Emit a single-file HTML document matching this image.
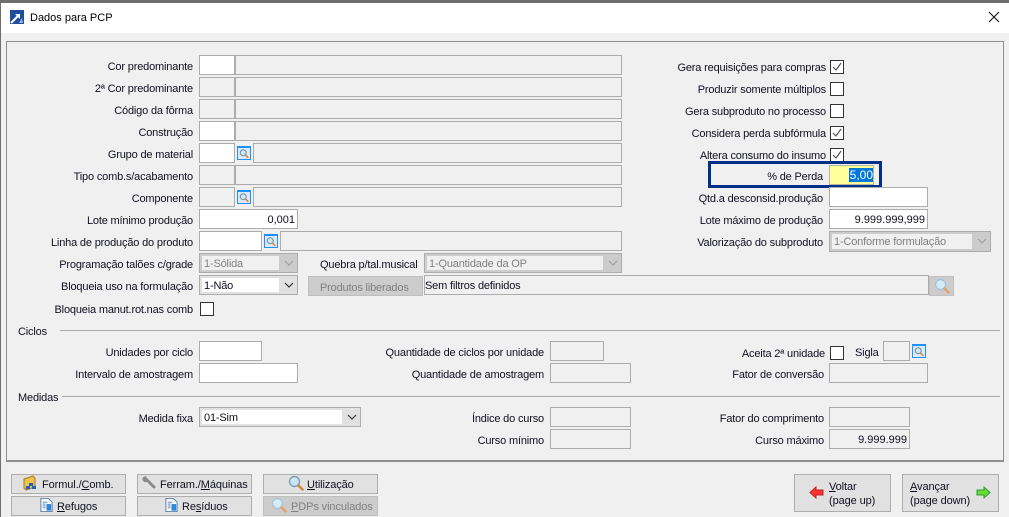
<!DOCTYPE html>
<html><head><meta charset="utf-8"><style>
html,body{margin:0;padding:0}
body{width:1009px;height:517px;overflow:hidden;background:#f0f0f0;position:relative;font:11px/16px "Liberation Sans",sans-serif;letter-spacing:-.17px;color:#101020}
div,svg{position:absolute;box-sizing:border-box}
.f{border:1px solid #acacac;background:#f0f0f0}
.w{background:#fff}
.t{white-space:nowrap;margin-top:1px}
.r{white-space:nowrap;text-align:right;left:-1px;margin-top:1px}
.v{text-align:right;padding-right:2px;line-height:20px;white-space:nowrap;color:#101020;letter-spacing:0}
.c{width:14px;height:14px;border:1px solid #333;background:#fff}
.b{border:1px solid #adadad;background:#e1e1e1;height:20px}
.d{background:#ccc;border-color:#bfbfbf}
.x{white-space:nowrap;letter-spacing:-.1px;margin-top:1px}
.g{color:#808080}
.s{border:1px solid #acacac;background:#ccc;height:20px}
.s i{position:absolute;left:2px;top:2px;bottom:2px;right:18px;background:#f0f0f0;font-style:normal;line-height:16px;padding-left:2px;color:#808080;white-space:nowrap}
.s svg{right:3px;top:6px}
.q{width:14px;height:14px;border:1px solid #1e90ff;border-top-width:2px;background:#dfe9f5}
u{text-decoration:underline}
</style></head><body>
<svg width="0" height="0" style="display:none"><defs>
<symbol id="m" viewBox="0 0 14 14"><circle cx="6" cy="6" r="3.8" fill="#cfe6f2" stroke="#6d8ca0" stroke-width="1.3"/><path d="M9 9l3.5 3.5" stroke="#e08a3c" stroke-width="2.2"/></symbol>
<symbol id="n" viewBox="0 0 16 16"><circle cx="6.5" cy="6.5" r="5" fill="#d4ecf8" stroke="#a9c4d4" stroke-width="1.4"/><path d="M10.5 10.5l4 4" stroke="#e2a468" stroke-width="2.6" stroke-linecap="round"/></symbol>
<symbol id="o" viewBox="0 0 16 16"><circle cx="6.5" cy="6.5" r="5" fill="#c8e6f6" stroke="#7fa0b4" stroke-width="1.4"/><path d="M10.5 10.5l4 4" stroke="#d0863c" stroke-width="2.6" stroke-linecap="round"/></symbol>
<symbol id="doc" viewBox="0 0 16 16"><path d="M2 1h8l4 4v10H2z" fill="#f4f8fc" stroke="#5a7fa8"/><path d="M4 5h5M4 7h3M4 9h3M4 11h3" stroke="#5a7fa8"/><rect x="8" y="7" width="5" height="7" fill="#2f86d6"/></symbol>
</defs></svg>

<div style="left:0;top:0;width:1009px;height:3px;background:#6e6e6e"></div>
<div style="left:0;top:0;width:1px;height:517px;background:#6e6e6e"></div>
<div style="left:1px;top:3px;width:1008px;height:30px;background:#fff"></div>
<svg style="left:10px;top:10px" width="14" height="14" viewBox="0 0 14 14"><rect width="14" height="14" fill="#1f4e9a"/><path d="M1 13L8 6" stroke="#fff" stroke-width="2"/><path d="M5 4h5v5z" fill="#fff"/><path d="M9 13l3-5 1 5z" fill="#9fb7da"/></svg>
<div class="t" style="left:30px;top:9px;color:#000;letter-spacing:0">Dados para PCP</div>
<svg style="left:988px;top:11px" width="12" height="12" viewBox="0 0 12 12"><path d="M1 1l10 10M11 1L1 11" stroke="#111" stroke-width="1.1"/></svg>

<div style="left:6px;top:41px;width:998px;height:421px;border:1px solid #8f8f8f;border-bottom:2px solid #8f8f8f"></div>

<div class="r" style="width:194px;top:58px">Cor predominante</div>
<div class="r" style="width:194px;top:80px">2ª Cor predominante</div>
<div class="r" style="width:194px;top:102px">Código da fôrma</div>
<div class="r" style="width:194px;top:124px">Construção</div>
<div class="r" style="width:194px;top:146px">Grupo de material</div>
<div class="r" style="width:194px;top:168px">Tipo comb.s/acabamento</div>
<div class="r" style="width:194px;top:190px">Componente</div>
<div class="r" style="width:194px;top:212px">Lote mínimo produção</div>
<div class="r" style="width:194px;top:234px">Linha de produção do produto</div>
<div class="r" style="width:194px;top:256px">Programação talões c/grade</div>
<div class="r" style="width:194px;top:278px">Bloqueia uso na formulação</div>
<div class="r" style="width:194px;top:301px">Bloqueia manut.rot.nas comb</div>

<div class="f w" style="left:199px;top:55px;width:36px;height:20px"></div>
<div class="f" style="left:235px;top:55px;width:387px;height:20px"></div>
<div class="f" style="left:199px;top:77px;width:36px;height:20px"></div>
<div class="f" style="left:235px;top:77px;width:387px;height:20px"></div>
<div class="f" style="left:199px;top:99px;width:36px;height:20px"></div>
<div class="f" style="left:235px;top:99px;width:387px;height:20px"></div>
<div class="f w" style="left:199px;top:121px;width:36px;height:20px"></div>
<div class="f" style="left:235px;top:121px;width:387px;height:20px"></div>
<div class="f w" style="left:199px;top:143px;width:36px;height:20px"></div>
<div class="q" style="left:237px;top:146px"><svg style="left:0;top:0" width="12" height="11"><use href="#m"/></svg></div>
<div class="f" style="left:253px;top:143px;width:369px;height:20px"></div>
<div class="f" style="left:199px;top:165px;width:36px;height:20px"></div>
<div class="f" style="left:235px;top:165px;width:387px;height:20px"></div>
<div class="f" style="left:199px;top:187px;width:36px;height:20px"></div>
<div class="q" style="left:237px;top:190px"><svg style="left:0;top:0" width="12" height="11"><use href="#m"/></svg></div>
<div class="f" style="left:253px;top:187px;width:369px;height:20px"></div>
<div class="f w v" style="left:199px;top:209px;width:99px;height:20px">0,001</div>
<div class="f w" style="left:199px;top:231px;width:63px;height:20px"></div>
<div class="q" style="left:264px;top:234px"><svg style="left:0;top:0" width="12" height="11"><use href="#m"/></svg></div>
<div class="f" style="left:280px;top:231px;width:342px;height:20px"></div>

<div class="s" style="left:199px;top:253px;width:99px"><i>1-Sólida</i><svg width="10" height="6" viewBox="0 0 10 6"><path d="M1 1l4 4 4-4" fill="none" stroke="#a0a0a0" stroke-width="1.2"/></svg></div>
<div class="t" style="left:320px;top:256px">Quebra p/tal.musical</div>
<div class="s" style="left:424px;top:253px;width:198px"><i>1-Quantidade da OP</i><svg width="10" height="6" viewBox="0 0 10 6"><path d="M1 1l4 4 4-4" fill="none" stroke="#a0a0a0" stroke-width="1.2"/></svg></div>

<div class="s" style="left:199px;top:275px;width:99px;background:#e1e1e1"><i style="background:#fff;color:#101020">1-Não</i><svg width="10" height="6" viewBox="0 0 10 6"><path d="M1 1l4 4 4-4" fill="none" stroke="#333" stroke-width="1.2"/></svg></div>
<div class="b d" style="left:308px;top:276px;width:115px"></div>
<div class="t g" style="left:320px;top:279px">Produtos liberados</div>
<div class="f" style="left:424px;top:275px;width:505px;height:20px;line-height:20px;white-space:nowrap">Sem filtros definidos</div>
<div style="left:929px;top:276px;width:25px;height:20px;background:#ccc;border:1px solid #c0c0c0"><svg style="left:4px;top:1px" width="16" height="16"><use href="#n"/></svg></div>
<div class="c" style="left:200px;top:302px"></div>

<div class="r" style="width:827px;top:59px">Gera requisições para compras</div>
<div class="r" style="width:827px;top:81px">Produzir somente múltiplos</div>
<div class="r" style="width:827px;top:103px">Gera subproduto no processo</div>
<div class="r" style="width:827px;top:125px">Considera perda subfórmula</div>
<div class="r" style="width:827px;top:147px">Altera consumo do insumo</div>
<div class="c" style="left:830px;top:60px"><svg style="left:1px;top:1px" width="10" height="10" viewBox="0 0 10 10"><path d="M1 5l3 3 5-7" fill="none" stroke="#555" stroke-width="1.2"/></svg></div>
<div class="c" style="left:830px;top:82px"></div>
<div class="c" style="left:830px;top:104px"></div>
<div class="c" style="left:830px;top:126px"><svg style="left:1px;top:1px" width="10" height="10" viewBox="0 0 10 10"><path d="M1 5l3 3 5-7" fill="none" stroke="#555" stroke-width="1.2"/></svg></div>
<div class="c" style="left:830px;top:148px"><svg style="left:1px;top:1px" width="10" height="10" viewBox="0 0 10 10"><path d="M1 5l3 3 5-7" fill="none" stroke="#555" stroke-width="1.2"/></svg></div>

<div style="left:708px;top:161px;width:174px;height:27px;border:3px solid #003087"></div>
<div class="r" style="width:824px;top:168px">% de Perda</div>
<div style="left:829px;top:165px;width:45px;height:20px;border:1px solid #b5b5a0;background:#ffff99"></div>
<div style="left:849px;top:168px;width:24px;height:14px;background:#0078d7;color:#fff;line-height:14px;text-align:right;font-size:12px;letter-spacing:0">5,00</div>

<div class="r" style="width:824px;top:190px">Qtd.a desconsid.produção</div>
<div class="f w" style="left:829px;top:187px;width:99px;height:20px"></div>
<div class="r" style="width:824px;top:212px">Lote máximo de produção</div>
<div class="f w v" style="left:829px;top:209px;width:99px;height:20px">9.999.999,999</div>
<div class="r" style="width:824px;top:234px">Valorização do subproduto</div>
<div class="s" style="left:829px;top:231px;width:162px;height:21px"><i>1-Conforme formulação</i><svg width="10" height="6" viewBox="0 0 10 6"><path d="M1 1l4 4 4-4" fill="none" stroke="#a0a0a0" stroke-width="1.2"/></svg></div>

<div class="t" style="left:18px;top:323px">Ciclos</div>
<div style="left:60px;top:330px;width:940px;height:1px;background:#a8a8a8"></div>
<div class="r" style="width:194px;top:344px">Unidades por ciclo</div>
<div class="f w" style="left:199px;top:341px;width:63px;height:20px"></div>
<div class="r" style="width:545px;top:344px">Quantidade de ciclos por unidade</div>
<div class="f" style="left:550px;top:341px;width:54px;height:20px"></div>
<div class="r" style="width:826px;top:345px">Aceita 2ª unidade</div>
<div class="c" style="left:830px;top:346px"></div>
<div class="t" style="left:855px;top:344px">Sigla</div>
<div class="f" style="left:883px;top:341px;width:27px;height:20px"></div>
<div class="q" style="left:912px;top:344px"><svg style="left:0;top:0" width="12" height="11"><use href="#m"/></svg></div>

<div class="r" style="width:194px;top:366px">Intervalo de amostragem</div>
<div class="f w" style="left:199px;top:363px;width:99px;height:20px"></div>
<div class="r" style="width:545px;top:366px">Quantidade de amostragem</div>
<div class="f" style="left:550px;top:363px;width:81px;height:20px"></div>
<div class="r" style="width:825px;top:366px">Fator de conversão</div>
<div class="f" style="left:829px;top:363px;width:99px;height:20px"></div>

<div class="t" style="left:18px;top:389px">Medidas</div>
<div style="left:62px;top:396px;width:938px;height:1px;background:#a8a8a8"></div>
<div class="r" style="width:194px;top:410px">Medida fixa</div>
<div class="s" style="left:199px;top:407px;width:162px;background:#e1e1e1"><i style="background:#fff;color:#101020">01-Sim</i><svg width="10" height="6" viewBox="0 0 10 6"><path d="M1 1l4 4 4-4" fill="none" stroke="#333" stroke-width="1.2"/></svg></div>
<div class="r" style="width:545px;top:410px">Índice do curso</div>
<div class="f" style="left:550px;top:407px;width:81px;height:20px"></div>
<div class="r" style="width:825px;top:410px">Fator do comprimento</div>
<div class="f" style="left:829px;top:407px;width:81px;height:20px"></div>
<div class="r" style="width:545px;top:432px">Curso mínimo</div>
<div class="f" style="left:550px;top:429px;width:81px;height:20px"></div>
<div class="r" style="width:825px;top:432px">Curso máximo</div>
<div class="f v" style="left:829px;top:429px;width:81px;height:20px">9.999.999</div>

<div class="b" style="left:11px;top:474px;width:115px"></div>
<div class="x" style="left:42px;top:476px">Formul./<u>C</u>omb.</div>
<svg style="left:23px;top:475px" width="16" height="16" viewBox="0 0 16 16"><path d="M1 4l9-3 2 2v9l-9 3-2-2z" fill="#f0c34a" stroke="#a87a18"/><rect x="6" y="8" width="4" height="3" fill="#1f5fc8"/><rect x="3" y="11" width="4" height="3" fill="#1f5fc8"/><rect x="9" y="11" width="4" height="3" fill="#1f5fc8"/></svg>
<div class="b" style="left:137px;top:474px;width:115px"></div>
<div class="x" style="left:160px;top:476px">Ferram./<u>M</u>áquinas</div>
<svg style="left:141px;top:475px" width="16" height="16" viewBox="0 0 16 16"><path d="M5 4l8 8" stroke="#8a8a8a" stroke-width="3" stroke-linecap="round"/><path d="M1.5 5A3 3 0 0 1 5.5 1.5L4 4l1.5 1.5L7 4A3 3 0 0 1 3 7z" fill="#8a8a8a"/></svg>
<div class="b" style="left:263px;top:474px;width:115px"></div>
<div class="x" style="left:307px;top:476px"><u>U</u>tilização</div>
<svg style="left:288px;top:475px" width="16" height="16"><use href="#o"/></svg>
<div class="b" style="left:11px;top:496px;width:115px"></div>
<div class="x" style="left:57px;top:498px"><u>R</u>efugos</div>
<svg style="left:39px;top:497px" width="15" height="16"><use href="#doc"/></svg>
<div class="b" style="left:137px;top:496px;width:115px"></div>
<div class="x" style="left:182px;top:498px">Re<u>s</u>íduos</div>
<svg style="left:164px;top:497px" width="15" height="16"><use href="#doc"/></svg>
<div class="b d" style="left:263px;top:496px;width:115px"></div>
<div class="x g" style="left:291px;top:498px"><u>P</u>DPs vinculados</div>
<svg style="left:271px;top:497px" width="16" height="16"><use href="#n"/></svg>

<div class="b" style="left:794px;top:474px;width:97px;height:38px"></div>
<svg style="left:809px;top:486px" width="15" height="13" viewBox="0 0 15 13"><path d="M1 6.5L7 1v3h7v5H7v3z" fill="#f33" stroke="#b22"/></svg>
<div class="x" style="left:829px;top:479px;line-height:14px"><u>V</u>oltar<br>(page up)</div>
<div class="b" style="left:902px;top:474px;width:97px;height:38px"></div>
<div class="x" style="left:910px;top:479px;line-height:14px"><u>A</u>vançar<br>(page down)</div>
<svg style="left:976px;top:486px" width="15" height="13" viewBox="0 0 15 13"><path d="M14 6.5L8 1v3H1v5h7v3z" fill="#6d3" stroke="#393"/></svg>
</body></html>
